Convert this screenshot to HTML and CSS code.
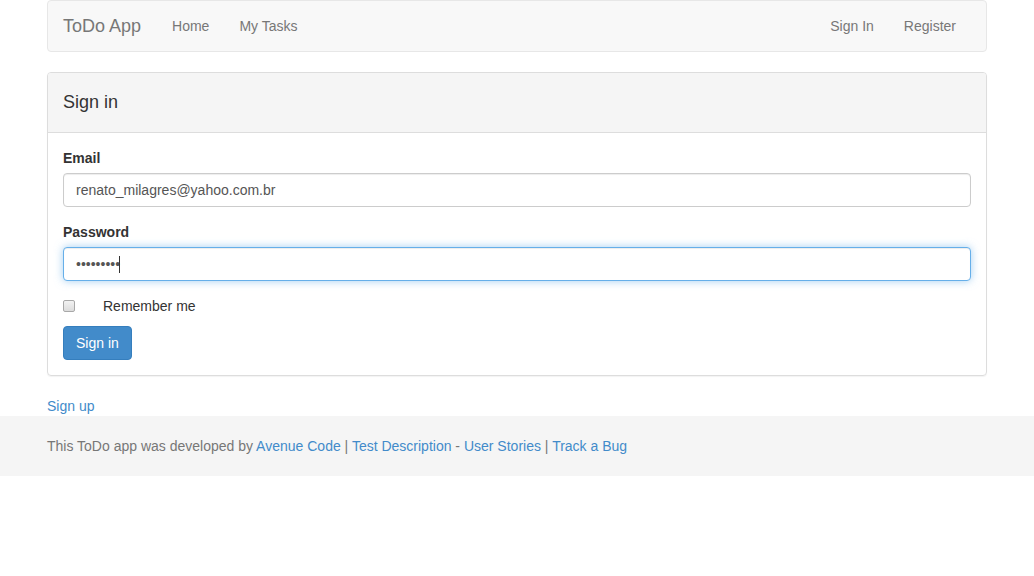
FILE: index.html
```html
<!DOCTYPE html>
<html lang="en">
<head>
<meta charset="utf-8">
<title>ToDo App</title>
<link rel="stylesheet" href="styles.css">
</head>
<body>
<div class="container">
  <nav class="navbar">
    <a class="brand" href="#">ToDo App</a>
    <ul class="nav">
      <li><a href="#">Home</a></li>
      <li><a href="#">My Tasks</a></li>
    </ul>
    <ul class="nav nav-right">
      <li><a href="#">Sign In</a></li>
      <li><a href="#">Register</a></li>
    </ul>
  </nav>

  <div class="panel">
    <div class="panel-heading">
      <h3 class="panel-title">Sign in</h3>
    </div>
    <div class="panel-body">
      <form class="form">
        <div class="form-group">
          <label class="label" for="email">Email</label>
          <input class="form-control" id="email" type="email" value="renato_milagres@yahoo.com.br">
        </div>
        <div class="form-group">
          <label class="label" for="password">Password</label>
          <div class="input-wrap">
            <input class="form-control is-focused" id="password" type="password" value="123456789">
            <span class="caret"></span>
          </div>
        </div>
        <div class="checkbox-row">
          <input class="checkbox" id="remember" type="checkbox">
          <label class="checkbox-label" for="remember">Remember me</label>
        </div>
        <button class="btn-primary" type="button">Sign in</button>
      </form>
    </div>
  </div>

  <a class="link" href="#">Sign up</a>
</div>

<footer class="footer">
  <div class="container footer-text">
    This ToDo app was developed by <a class="link" href="#">Avenue Code</a> | <a class="link" href="#">Test Description</a> - <a class="link" href="#">User Stories</a> | <a class="link" href="#">Track a Bug</a>
  </div>
</footer>
</body>
</html>
```

FILE: styles.css
```css
* {
  box-sizing: border-box;
}

html, body {
  margin: 0;
  padding: 0;
}

body {
  font-family: "Liberation Sans", Arial, Helvetica, sans-serif;
  font-size: 14px;
  line-height: 20px;
  color: #333;
  background: #fff;
}

.container {
  width: 970px;
  margin: 0 auto;
  padding: 0 15px;
}

.link {
  color: #428bca;
  text-decoration: none;
}

/* navbar */
.navbar {
  display: flex;
  align-items: center;
  height: 52px;
  background: #f8f8f8;
  border: 1px solid #e7e7e7;
  border-radius: 4px;
  margin-bottom: 20px;
  padding: 0 15px;
}

.brand {
  font-size: 18px;
  line-height: 20px;
  color: #777;
  text-decoration: none;
  padding: 15px 16px 15px 0;
}

.nav {
  display: flex;
  list-style: none;
  margin: 0;
  padding: 0;
}

.nav a {
  display: block;
  padding: 15px;
  color: #777;
  text-decoration: none;
  line-height: 20px;
}

.nav-right {
  margin-left: auto;
}

/* panel */
.panel {
  border: 1px solid #ddd;
  border-radius: 4px;
  margin-bottom: 20px;
  box-shadow: 0 1px 1px rgba(0, 0, 0, 0.05);
}

.panel-heading {
  display: flex;
  align-items: center;
  height: 60px;
  padding: 0 15px 2px;
  background: #f5f5f5;
  border-bottom: 1px solid #ddd;
  border-radius: 3px 3px 0 0;
}

.panel-title {
  margin: 0;
  font-size: 18px;
  font-weight: normal;
  line-height: 20px;
  color: #333;
}

.panel-body {
  padding: 15px;
}

.form-group {
  margin-bottom: 15px;
}

.label {
  display: block;
  font-weight: bold;
  margin-bottom: 5px;
}

.input-wrap {
  position: relative;
}

.caret {
  position: absolute;
  left: 56px;
  top: 9px;
  width: 1px;
  height: 17px;
  background: #333;
}

.form-control {
  display: block;
  width: 100%;
  height: 34px;
  padding: 6px 12px;
  font-family: inherit;
  font-size: 14px;
  line-height: 20px;
  color: #555;
  background: #fff;
  border: 1px solid #ccc;
  border-radius: 4px;
  box-shadow: inset 0 1px 1px rgba(0, 0, 0, 0.075);
  outline: none;
}

.is-focused {
  border-color: #66afe9;
  box-shadow: inset 0 1px 1px rgba(0, 0, 0, 0.075), 0 0 8px rgba(102, 175, 233, 0.6);
}

.checkbox-row {
  display: flex;
  align-items: center;
  gap: 28px;
  height: 20px;
  margin-bottom: 10px;
}

.checkbox {
  appearance: none;
  -webkit-appearance: none;
  margin: 0;
  width: 12px;
  height: 12px;
  background: linear-gradient(#f2f2f2, #dcdcdc);
  border: 1px solid #a8a8a8;
  border-radius: 2px;
}

.checkbox-label {
  line-height: 20px;
}

.btn-primary {
  display: block;
  height: 34px;
  padding: 6px 12px;
  font-family: inherit;
  font-size: 14px;
  line-height: 20px;
  color: #fff;
  background: #428bca;
  border: 1px solid #357ebd;
  border-radius: 4px;
  cursor: pointer;
}

/* footer */
.footer {
  background: #f5f5f5;
  height: 60px;
}

.footer-text {
  line-height: 60px;
  color: #777;
}
```
